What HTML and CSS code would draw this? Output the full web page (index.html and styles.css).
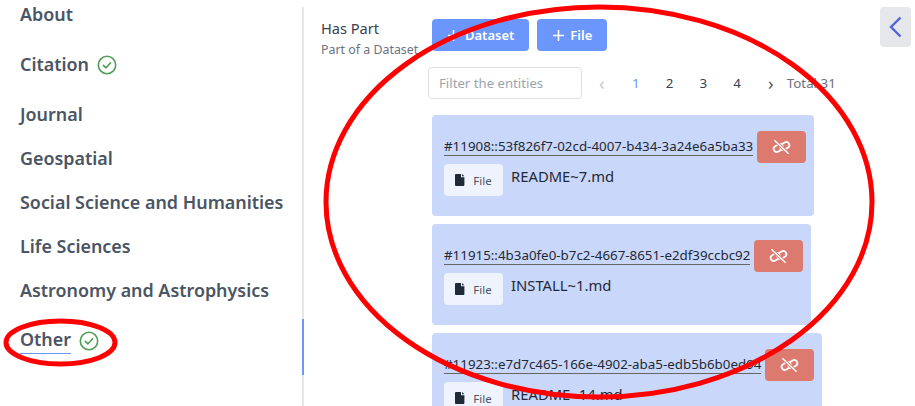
FILE: index.html
```html
<!DOCTYPE html>
<html lang="en">
<head>
  <meta charset="UTF-8">
  <title>Has Part</title>
  <link rel="stylesheet" href="styles.css">
</head>
<body>
  <svg width="0" height="0" class="defs">
    <symbol id="check" viewBox="0 0 20 20">
      <circle cx="10" cy="10" r="8.7" fill="none" stroke="currentColor" stroke-width="1.6"/>
      <path d="M6.4 10.3l2.6 2.5 4.6-5" fill="none" stroke="currentColor" stroke-width="1.6" stroke-linecap="round" stroke-linejoin="round"/>
    </symbol>
    <symbol id="plus" viewBox="0 0 14 14">
      <path d="M7 1v12M1 7h12" fill="none" stroke="currentColor" stroke-width="1.7"/>
    </symbol>
    <symbol id="file" viewBox="0 0 10 12">
      <path d="M1 0h5v3.2h3.4V11a1 1 0 0 1-1 1H1a1 1 0 0 1-1-1V1a1 1 0 0 1 1-1zM7 0l2.4 2.3H7z" fill="currentColor"/>
    </symbol>
    <symbol id="unlink" viewBox="0 0 20 16">
      <rect x="1.500" y="5.800" width="10" height="6.500" rx="3.250" transform="rotate(-32 6.500 9)" fill="none" stroke="currentColor" stroke-width="1.900"/>
      <rect x="8.500" y="3.700" width="10" height="6.500" rx="3.250" transform="rotate(-32 13.500 7)" fill="none" stroke="currentColor" stroke-width="1.900"/>
      <path d="M2.500 1l15 14" fill="none" stroke="#dc7a70" stroke-width="3.500"/>
      <path d="M2.500 1l15 14" fill="none" stroke="currentColor" stroke-width="1.500"/>
    </symbol>
  </svg>

  <div class="page">
    <nav class="sidebar">
      <div class="side-list">
        <div class="side-item">About</div>
        <div class="side-item tall">Citation <svg class="check"><use href="#check"/></svg></div>
        <div class="side-item">Journal</div>
        <div class="side-item">Geospatial</div>
        <div class="side-item">Social Science and Humanities</div>
        <div class="side-item">Life Sciences</div>
        <div class="side-item">Astronomy and Astrophysics</div>
        <div class="side-item tall"><span class="current">Other</span> <svg class="check"><use href="#check"/></svg></div>
      </div>
      <div class="ink"></div>
    </nav>

    <main class="content">
      <div class="part-label">
        <div class="part-title">Has Part</div>
        <div class="part-sub">Part of a Dataset</div>
      </div>
      <div class="part-body">
        <div class="add-row">
          <button class="btn-add"><svg class="plus"><use href="#plus"/></svg>Dataset</button>
          <button class="btn-add"><svg class="plus"><use href="#plus"/></svg>File</button>
        </div>
        <div class="filter-row">
          <input class="filter" type="text" placeholder="Filter the entities">
          <div class="pager">
            <span class="page-arrow off">&#8249;</span>
            <span class="page-num active">1</span>
            <span class="page-num">2</span>
            <span class="page-num">3</span>
            <span class="page-num">4</span>
            <span class="page-arrow">&#8250;</span>
            <span class="total">Total 31</span>
          </div>
        </div>

        <div class="card">
          <div class="card-top">
            <a class="entity">#11908::53f826f7-02cd-4007-b434-3a24e6a5ba33</a>
            <button class="btn-unlink"><svg class="unlink"><use href="#unlink"/></svg></button>
          </div>
          <div class="card-file">
            <span class="file-tag"><svg class="file-icon"><use href="#file"/></svg>File</span>
            <span class="file-name">README~7.md</span>
          </div>
        </div>

        <div class="card">
          <div class="card-top">
            <a class="entity">#11915::4b3a0fe0-b7c2-4667-8651-e2df39ccbc92</a>
            <button class="btn-unlink"><svg class="unlink"><use href="#unlink"/></svg></button>
          </div>
          <div class="card-file">
            <span class="file-tag"><svg class="file-icon"><use href="#file"/></svg>File</span>
            <span class="file-name">INSTALL~1.md</span>
          </div>
        </div>

        <div class="card">
          <div class="card-top">
            <a class="entity">#11923::e7d7c465-166e-4902-aba5-edb5b6b0ed94</a>
            <button class="btn-unlink"><svg class="unlink"><use href="#unlink"/></svg></button>
          </div>
          <div class="card-file">
            <span class="file-tag"><svg class="file-icon"><use href="#file"/></svg>File</span>
            <span class="file-name">README~14.md</span>
          </div>
        </div>
      </div>
    </main>

    <button class="collapse">
      <svg width="13" height="22" viewBox="0 0 13 22"><path d="M11.500 1.500L2 11l9.500 9.500" fill="none" stroke="currentColor" stroke-width="2.400"/></svg>
    </button>
  </div>

  <!-- hand drawn red marks on top of the screenshot -->
  <svg class="marks" width="915" height="406" viewBox="0 0 915 406">
    <ellipse cx="599" cy="202" rx="273" ry="195" fill="none" stroke="#f00" stroke-width="5"/>
    <ellipse cx="60.500" cy="342.500" rx="54.500" ry="21.500" fill="none" stroke="#f00" stroke-width="5"/>
  </svg>
</body>
</html>
```

FILE: styles.css
```css
body {
  margin: 0;
  font-family: "Noto Sans", "Open Sans", sans-serif;
  background-color: #fff;
  color: #333;
  height: 406px;
  overflow: hidden;
  position: relative;
}

.defs {
  display: block;
}

.page {
  display: flex;
  height: 406px;
  overflow: hidden;
}

/* left anchor list */
.sidebar {
  flex: none;
  width: 304px;
  height: 399px;
  margin-top: 7px;
  box-sizing: border-box;
  border-right: 2px solid #e5e7eb;
  position: relative;
}

.side-list {
  margin-top: -15px;
  padding-left: 20px;
}

.side-item {
  display: flex;
  align-items: center;
  gap: 8px;
  height: 44px;
  font-size: 17.900px;
  font-weight: 600;
  color: #4b5563;
  white-space: nowrap;
}

.side-item.tall {
  height: 56px;
}

.current {
  border-bottom: 1px solid #6b96fb;
  line-height: 27px;
}

.check {
  width: 20px;
  height: 20px;
  color: #4f9d56;
  margin-top: 2px;
}

.ink {
  position: absolute;
  top: 312px;
  right: -2px;
  width: 2px;
  height: 56px;
  background-color: #6b96fb;
}

/* main part */
.content {
  flex: none;
  width: 576px;
  display: flex;
  padding: 19px 0 0 17px;
  box-sizing: border-box;
}

.part-label {
  flex: none;
  width: 107px;
}

.part-title {
  font-size: 14.600px;
  line-height: 19px;
  color: #374151;
}

.part-sub {
  font-size: 12.400px;
  line-height: 16px;
  margin-top: 4px;
  color: #6b7280;
  white-space: nowrap;
}

.add-row {
  display: flex;
  gap: 8px;
  padding-left: 4px;
}

.btn-add {
  display: flex;
  align-items: center;
  justify-content: center;
  gap: 5px;
  height: 32px;
  padding: 0 15px;
  border: none;
  border-radius: 4px;
  background-color: #6b96fb;
  color: #fff;
  font-family: inherit;
  font-size: 13px;
  font-weight: 600;
}

.plus {
  width: 13px;
  height: 13px;
}

.filter-row {
  display: flex;
  align-items: center;
  margin-top: 16px;
}

.filter {
  width: 154px;
  height: 32px;
  box-sizing: border-box;
  padding: 0 10px;
  border: 1px solid #dcdfe6;
  border-radius: 4px;
  font-family: inherit;
  font-size: 13.200px;
}

.filter::placeholder {
  color: #9ca3af;
}

.pager {
  display: flex;
  align-items: center;
  margin-left: 3px;
  font-size: 13.330px;
  color: #374151;
  white-space: nowrap;
}

.page-num,
.page-arrow {
  width: 33.800px;
  text-align: center;
}

.page-arrow {
  font-size: 18px;
  line-height: 20px;
  color: #555;
}

.page-arrow.off {
  color: #c4c7cc;
}

.page-num.active {
  color: #6b96fb;
}

.total {
  margin-left: -1px;
  color: #6b7280;
}

.card {
  width: fit-content;
  margin: 8px 0 0 4px;
  padding: 16px 8px 20px 12px;
  border-radius: 4px;
  background-color: #c9d8fa;
}

.filter-row + .card {
  margin-top: 16px;
}

.card-top {
  display: flex;
  gap: 4px;
}

.entity {
  height: 24px;
  line-height: 30px;
  border-bottom: 1px solid #666;
  font-size: 13.350px;
  color: #1f2937;
  white-space: nowrap;
}

.btn-unlink {
  flex: none;
  display: flex;
  align-items: center;
  justify-content: center;
  width: 49px;
  height: 32px;
  padding: 0;
  border: none;
  border-radius: 4px;
  background-color: #dc7a70;
  color: #fff;
}

.unlink {
  width: 19px;
  height: 16px;
}

.card-file {
  display: flex;
  gap: 8px;
  margin-top: 1px;
}

.file-tag {
  display: flex;
  align-items: center;
  justify-content: center;
  gap: 8px;
  width: 59px;
  height: 32px;
  border-radius: 4px;
  background-color: #eef3fe;
  font-size: 11.500px;
  color: #4b5563;
}

.file-icon {
  width: 10px;
  height: 12px;
  color: #1f2937;
}

.file-name {
  font-size: 14.800px;
  line-height: 24px;
  color: #1f2937;
}

.collapse {
  flex: none;
  display: flex;
  align-items: center;
  justify-content: center;
  width: 31px;
  height: 40px;
  margin-top: 7px;
  padding: 0;
  border: none;
  border-radius: 4px;
  background-color: #e5e7eb;
  color: #4f63e6;
}

/* red marks lie over everything */
.marks {
  position: absolute;
  left: 0;
  top: 0;
  pointer-events: none;
}
```
